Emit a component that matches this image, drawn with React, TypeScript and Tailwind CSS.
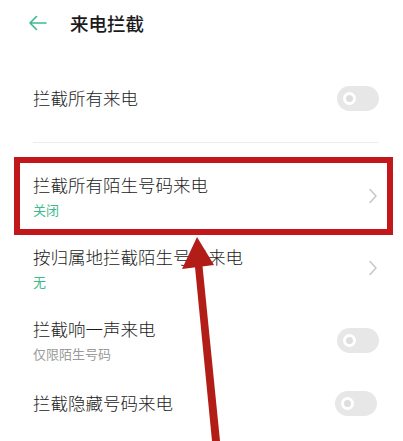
const font = { fontFamily: '"Noto Sans CJK SC", "Noto Sans", sans-serif' };

function Toggle() {
  return (
    <div className="flex h-[25px] w-[42px] items-center rounded-full bg-[#e7e7e7] pl-[6px]">
      <div className="flex h-[13px] w-[13px] items-center justify-center rounded-full bg-white">
        <div className="h-[7px] w-[7px] rounded-full bg-[#dedede]" />
      </div>
    </div>
  );
}

function Chevron() {
  return (
    <svg width="10" height="16" viewBox="0 0 10 16" fill="none">
      <path d="M2 1.5 L8 8 L2 14.5" stroke="#c9c9c9" strokeWidth="1.6" strokeLinecap="round" strokeLinejoin="round" />
    </svg>
  );
}

interface Item {
  title: string;
  sub?: string;
  subColor?: string;
  trailing: 'toggle' | 'chevron';
}

const items: Item[] = [
  { title: '拦截所有陌生号码来电', sub: '关闭', subColor: 'text-[#3cba8c]', trailing: 'chevron' },
  { title: '按归属地拦截陌生号码来电', sub: '无', subColor: 'text-[#3cba8c]', trailing: 'chevron' },
  { title: '拦截响一声来电', sub: '仅限陌生号码', subColor: 'text-[#9b9b9b]', trailing: 'toggle' },
];

export default function App() {
  return (
    <div className="relative h-[441px] w-[403px] overflow-hidden bg-white text-[#1b1b1b]" style={font}>
      <header className="flex h-[45px] items-center pl-[28px]">
        <svg width="20" height="16" viewBox="0 0 20 16" fill="none">
          <path d="M2 8 H18 M2 8 L8.5 1.5 M2 8 L8.5 14.5" stroke="#3dbb8e" strokeWidth="1.6" strokeLinecap="round" strokeLinejoin="round" />
        </svg>
        <h1 className="ml-[22px] text-[18.5px] font-medium leading-6">来电拦截</h1>
      </header>

      <div className="mt-[17px] flex h-[72px] items-center justify-between pl-[33px] pr-[24px]">
        <span className="text-[17.5px] font-light leading-6">拦截所有来电</span>
        <Toggle />
      </div>
      <div className="ml-[33px] mr-[25px] mt-[8px] h-px bg-[#ececec]" />

      <div className="mt-[17px]">
        {items.map((it) => (
          <div key={it.title} className="flex h-[72px] items-center justify-between pl-[33px] pr-[24px]">
            <div className="flex flex-col">
              <span className="text-[17.5px] font-light leading-6">{it.title}</span>
              <span className={`mt-[4px] text-[13px] leading-[18px] ${it.subColor}`}>{it.sub}</span>
            </div>
            {it.trailing === 'toggle' ? <Toggle /> : <div className="pr-[1px]"><Chevron /></div>}
          </div>
        ))}
        <div className="flex h-[54px] items-center justify-between pl-[33px] pr-[26px]">
          <span className="text-[17.5px] font-light leading-6">拦截隐藏号码来电</span>
          <Toggle />
        </div>
      </div>

      {/* highlight frame around the stranger-call row */}
      <div className="absolute left-[14px] top-[157px] h-[78px] w-[379px] border-[6px] border-[#c2171b]" />

      {/* pointer arrow */}
      <svg className="absolute left-0 top-0" width="403" height="441" viewBox="0 0 403 441">
        <polygon points="197,237 182,269 214,265" fill="#b21d18" />
        <polygon points="194.5,262 202,261 220,441 212,441" fill="#b21d18" />
      </svg>
    </div>
  );
}
